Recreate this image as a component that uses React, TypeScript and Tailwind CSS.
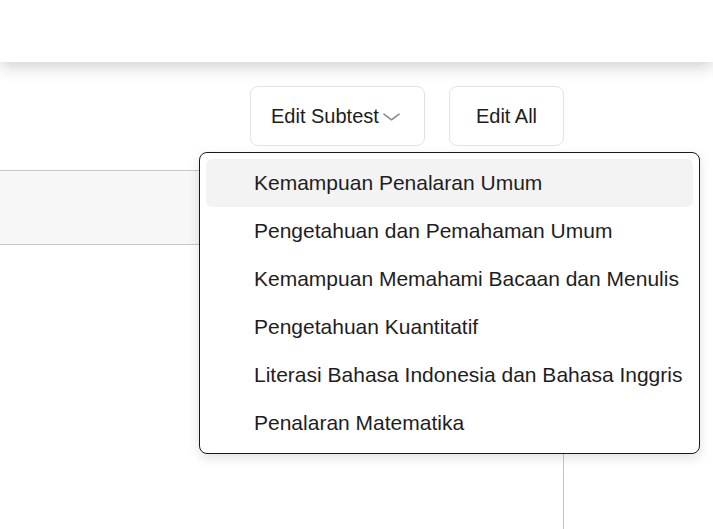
import React from "react";

const subtests = [
  "Kemampuan Penalaran Umum",
  "Pengetahuan dan Pemahaman Umum",
  "Kemampuan Memahami Bacaan dan Menulis",
  "Pengetahuan Kuantitatif",
  "Literasi Bahasa Indonesia dan Bahasa Inggris",
  "Penalaran Matematika",
];

function Chevron() {
  return (
    <svg width="17" height="8" viewBox="0 0 17 8" fill="none" className="ml-1 mt-0.5">
      <path d="M1 1.2 L8.5 6.8 L16 1.2" stroke="#8a8a8a" strokeWidth="1.6" strokeLinecap="round" strokeLinejoin="round" />
    </svg>
  );
}

export default function App() {
  return (
    <div className="relative h-[529px] w-[713px] overflow-hidden bg-white font-['Liberation_Sans',Arial,sans-serif] text-[#1c1c1c]">
      <header className="relative z-10 h-[62px] bg-white shadow-[0_4px_16px_rgba(0,0,0,0.2)]" />

      <div className="w-[564px]">
        <div className="flex justify-end gap-6 pt-6">
          <div className="relative">
            <button
              type="button"
              className="flex h-[60px] w-[175px] items-center rounded-lg border border-[#e2e2e2] bg-white pl-5 text-[20px]"
            >
              Edit Subtest
              <Chevron />
            </button>

            <div className="absolute left-[-51px] top-[calc(100%+6px)] z-20 w-[501px] rounded-lg border border-[#1a1a1a] bg-white p-1.5 shadow-[0_4px_12px_rgba(0,0,0,0.12)]">
              {subtests.map((s, i) => (
                <div
                  key={s}
                  className={`flex h-12 items-center rounded-md pl-12 text-[21px] text-[#1e1e1e] ${
                    i === 0 ? "bg-[#f3f3f3]" : ""
                  }`}
                >
                  {s}
                </div>
              ))}
            </div>
          </div>

          <button
            type="button"
            className="flex h-[60px] w-[115px] items-center justify-center rounded-lg border border-[#e2e2e2] bg-white text-[20px]"
          >
            Edit All
          </button>
        </div>

        <div className="mt-6">
          <div className="h-[75px] border-y border-[#c6c6ce] bg-[#f7f7f7]" />
          <div className="h-[300px] border-r border-[#c4c4c4]" />
        </div>
      </div>
    </div>
  );
}
